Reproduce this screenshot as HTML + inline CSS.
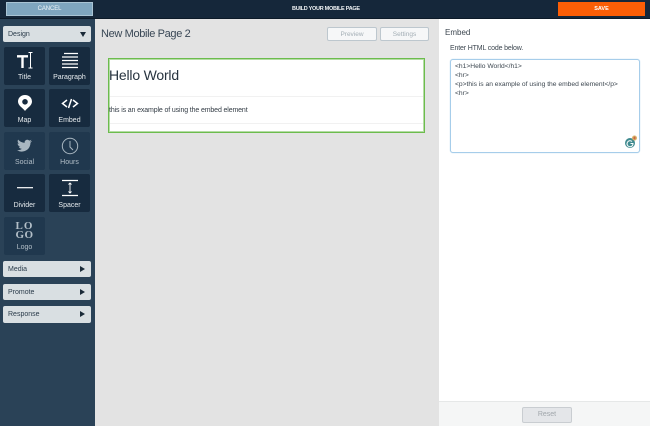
<!DOCTYPE html>
<html><head><meta charset="utf-8">
<style>
*{box-sizing:border-box;margin:0;padding:0}
html,body{width:650px;height:426px;overflow:hidden;background:#e3e3e3;font-family:"Liberation Sans",sans-serif;color:#2f3b47}
div,span{position:absolute;white-space:nowrap}
#top{left:0;top:0;width:650px;height:19px;background:#15273a;border-bottom:1px solid #0c1a28}
#cancel{left:6px;top:2px;width:87px;height:14px;background:#7fa6bf;border:1px solid #a9c4d4;color:#eef4f8;font-size:6px;text-align:center;line-height:12px;letter-spacing:-.1px}
#build{left:292px;top:5px;color:#f0f3f5;font-size:5.5px;line-height:9px;font-weight:bold;letter-spacing:-.27px}
#save{left:558px;top:2px;width:87px;height:14px;background:#fb5e06;color:#fff;font-size:5.5px;font-weight:bold;text-align:center;line-height:14px}
#side{left:0;top:19px;width:95px;height:407px;background:#2a4257}
.acc{left:3px;width:88px;background:#d9dfe2;border-radius:2px;color:#2a3b4a;font-size:7px;padding-left:5px}
.arr{width:0;height:0;border-top:3px solid transparent;border-bottom:3px solid transparent;border-left:5px solid #1a2a38;left:77px;top:5px}
.tile{width:41px;height:38px;background:#172b3f;border-radius:2px}
.tile.dim{background:#20384e}
.lbl{left:0;width:41px;text-align:center;top:27px;font-size:7px;line-height:9px;color:#e6ebee}
.dim .lbl{color:#b3bfc8}
.tile svg{position:absolute;left:0;top:0}
#main{left:95px;top:19px;width:345px;height:407px;background:#e3e3e3}
#title{left:6px;top:8px;font-size:11px;line-height:14px;color:#394755;letter-spacing:-.35px}
.btn{top:8px;height:14px;background:#f6f7f8;border:1px solid #bdc7ce;border-radius:2px;font-size:6.5px;color:#a3aeb5;text-align:center;line-height:13px}
#card{left:13px;top:39px;width:317px;height:75px;background:#fff;border:1px solid #6cbc4d;box-shadow:inset 0 0 0 1px #b5dca5}
#h{left:0;top:7px;font-size:14px;line-height:18px;color:#27333f;letter-spacing:-.2px}
#hr1{left:1px;top:37px;width:313px;height:1px;background:#f1f1f1}
#p{left:0;top:47px;font-size:7px;line-height:10px;color:#333c45;letter-spacing:-.13px}
#hr2{left:1px;top:64px;width:313px;height:1px;background:#f1f1f1}
#panel{left:439px;top:19px;width:211px;height:407px;background:#fff}
#pt{left:6px;top:8px;font-size:8px;line-height:11px;color:#3d4750}
#pl{left:11px;top:25px;font-size:7px;line-height:10px;color:#3d4750;letter-spacing:-.15px}
#ta{left:11px;top:40px;width:190px;height:94px;border:1px solid #a6cdea;border-radius:3px;background:#fff;box-shadow:0 0 1px #a6cdea}
#ta span{left:4px;font-size:6.7px;line-height:9px;color:#3d4750}
#foot{left:0;top:382px;width:211px;height:25px;background:#f5f6f6;border-top:1px solid #e6e8e8}
#reset{left:83px;top:5px;width:50px;height:16px;background:#e4e6e9;border:1px solid #c9cdd1;border-radius:2px;color:#a0a6ab;font-size:7px;text-align:center;line-height:14px}
</style></head><body>
<div id="top">
<div id="cancel">CANCEL</div>
<div id="build">BUILD YOUR MOBILE PAGE</div>
<div id="save">SAVE</div>
</div>
<div id="side">
<div class="acc" style="top:7px;height:16px;line-height:17px;">Design<span style="left:77px;top:6px;width:0;height:0;border-left:3.5px solid transparent;border-right:3.5px solid transparent;border-top:5px solid #1a2a38"></span></div>

<div class="tile" style="left:4px;top:28px"><svg width="41" height="26"><path d="M13 9.300H24M18.500 9.300V21" stroke="#fff" stroke-width="2.400" fill="none"/><path d="M24.500 5.500H28.500M26.500 5.500V21M24.500 21H28.500" stroke="#fff" stroke-width="1" fill="none"/></svg><span class="lbl" style="top:26px">Title</span></div>
<div class="tile" style="left:49px;top:28px"><svg width="41" height="26"><path d="M15 6.500H29M13 10H29M13 13.500H29M13 17H29M13 20.500H29" stroke="#fff" stroke-width="1.200" fill="none"/></svg><span class="lbl" style="top:26px">Paragraph</span></div>
<div class="tile" style="left:4px;top:70px"><svg width="41" height="26"><path fill-rule="evenodd" d="M21 6c-4.200 0-7 3-7 6.600 0 4 5 6.400 7 9.400 2-3 7-5.400 7-9.400C28 9 25.200 6 21 6zm0 4a2.800 2.800 0 1 1 0 5.600 2.800 2.800 0 0 1 0-5.600z" fill="#fff"/></svg><span class="lbl">Map</span></div>
<div class="tile" style="left:49px;top:70px"><svg width="41" height="26"><path d="M18 11l-4.500 3.500 4.500 3.500M22.500 10l-3 9M24 11l4.500 3.500-4.500 3.500" stroke="#fff" stroke-width="1.500" fill="none"/></svg><span class="lbl">Embed</span></div>
<div class="tile dim" style="left:4px;top:113px"><svg width="41" height="26"><path transform="translate(1.400 2.600) scale(.83 .8)" d="M32 8c-1 .5-1.800.6-2.500.7.800-.5 1.500-1.200 1.800-2.200-.8.500-1.700.8-2.600 1-2-2.200-6-.7-5.500 2.800-3.200-.2-6-1.700-7.900-4-1 1.800-.5 4 1.200 5.200-.7 0-1.300-.2-1.800-.5 0 2 1.400 3.600 3.200 4-.6.100-1.200.2-1.800.1.500 1.600 2 2.700 3.700 2.800-1.700 1.300-3.800 1.900-5.800 1.700 6 3.800 16 1 16.300-9.700.8-.5 1.400-1.200 1.700-1.900z" fill="#a9b7c1"/></svg><span class="lbl" style="top:26px">Social</span></div>
<div class="tile dim" style="left:49px;top:113px"><svg width="41" height="26"><circle cx="21" cy="14" r="7.700" stroke="#a9b7c1" stroke-width="1" fill="none"/><path d="M21 9v6l3 3" stroke="#a9b7c1" stroke-width="1" fill="none"/></svg><span class="lbl" style="top:26px">Hours</span></div>
<div class="tile" style="left:4px;top:155px"><svg width="41" height="26"><path d="M13 13.700H29" stroke="#fff" stroke-width="1.200"/></svg><span class="lbl">Divider</span></div>
<div class="tile" style="left:49px;top:155px"><svg width="41" height="26"><path d="M13 6.500H29M13 21.500H29" stroke="#fff" stroke-width="1.300"/><path d="M21 9V19M19.500 10.500L21 9L22.500 10.500M19.500 17.500L21 19L22.500 17.500" stroke="#fff" stroke-width=".9" fill="none"/></svg><span class="lbl">Spacer</span></div>
<div class="tile dim" style="left:4px;top:198px"><span style="left:0;width:41px;top:5px;text-align:center;font-family:'Liberation Serif',serif;font-weight:bold;font-size:11px;line-height:9px;color:#b3bfc8;letter-spacing:1px">LO</span><span style="left:0;width:41px;top:14px;text-align:center;font-family:'Liberation Serif',serif;font-weight:bold;font-size:11px;line-height:9px;color:#b3bfc8;letter-spacing:.5px">GO</span><span class="lbl" style="top:26px">Logo</span></div>

<div class="acc" style="top:242px;height:16px;line-height:17px;">Media<span class="arr"></span></div>
<div class="acc" style="top:265px;height:16px;line-height:17px;">Promote<span class="arr"></span></div>
<div class="acc" style="top:287px;height:17px;line-height:18px;">Response<span class="arr"></span></div>
</div>

<div id="main">
<div id="title">New Mobile Page 2</div>
<div class="btn" style="left:232px;width:50px">Preview</div>
<div class="btn" style="left:285px;width:49px">Settings</div>
<div id="card">
<div id="h">Hello World</div>
<div id="hr1"></div>
<div id="p">this is an example of using the embed element</div>
<div id="hr2"></div>
</div>
</div>

<div id="panel">
<div id="pt">Embed</div>
<div id="pl">Enter HTML code below.</div>
<div id="ta">
<span style="top:2px">&lt;h1&gt;Hello World&lt;/h1&gt;</span>
<span style="top:11px">&lt;hr&gt;</span>
<span style="top:20px">&lt;p&gt;this is an example of using the embed element&lt;/p&gt;</span>
<span style="top:29px">&lt;hr&gt;</span>
<svg style="position:absolute;left:173px;top:75px" width="15" height="15"><circle cx="6" cy="8" r="5" fill="#3f8a8f"/><path d="M8 6.500A3 3 0 1 0 9 8.500H6.500" stroke="#fff" stroke-width="1" fill="none"/><circle cx="10.500" cy="3" r="2.500" fill="#d9b36a"/><path d="M9 3H12M10.500 1.500V4.500" stroke="#c8553d" stroke-width=".7"/></svg>
</div>
<div id="foot"><div id="reset">Reset</div></div>
</div>
</body></html>
